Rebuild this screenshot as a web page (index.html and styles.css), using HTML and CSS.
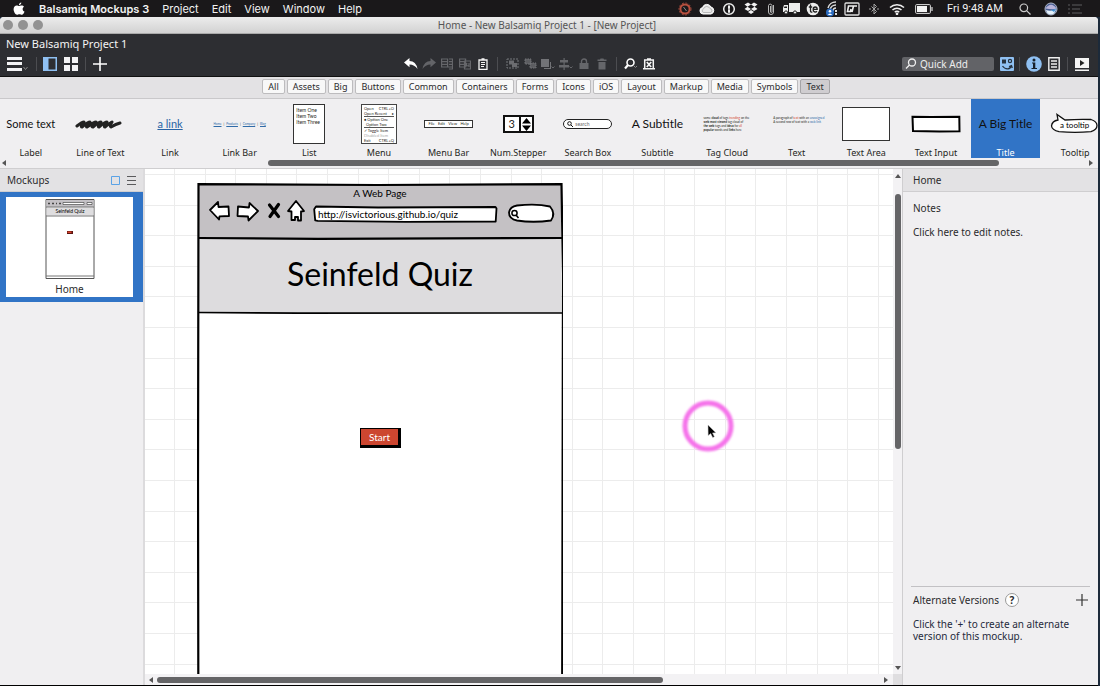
FILE: index.html
```
<!DOCTYPE html>
<html lang="en">
<head>
<meta charset="utf-8">
<title>Home - New Balsamiq Project 1 - [New Project]</title>
<link rel="stylesheet" href="styles.css">
</head>
<body>
<header class="menubar">
  <svg class="apple" width="12" height="14" viewBox="0 0 12 14"><path d="M8.300 .5c.1 1.400-1 2.700-2.300 2.700C5.900 1.800 7 .6 8.300.5zM6.200 4c.6 0 1.300-.6 2.400-.6 1 0 1.900.5 2.400 1.300-2 1.200-1.700 4 .5 4.900C11 11.200 10 12.800 8.800 12.800c-.9 0-1.300-.5-2.400-.5s-1.500.5-2.400.5C2.400 12.800.6 9.700.6 7.300c0-2.500 1.500-3.900 3.100-3.900C4.800 3.400 5.600 4 6.200 4z" fill="#fff"/></svg>
  <nav class="menus">
    <button class="app-name">Balsamiq Mockups 3</button>
    <button>Project</button><button>Edit</button><button>View</button><button>Window</button><button>Help</button>
  </nav>
  <div class="status">
    <span class="s22"><svg width="14" height="14" viewBox="0 0 14 14" fill="none"><circle cx="7" cy="7" r="4.600" stroke="#b8503f" stroke-width="2"/><circle cx="7" cy="7" r="6" stroke="#a0483a" stroke-dasharray="2 1.500"/><path d="M5.500 5l3 4" stroke="#8a8a8a"/></svg></span>
    <span class="s22"><svg width="16" height="12" viewBox="0 0 16 12"><path d="M4 11a3.300 3.300 0 0 1-.5-6.500A4.600 4.600 0 0 1 12 4a3.600 3.600 0 0 1 0 7z" fill="#e8e8e8" stroke="#fff"/><path d="M4.500 9.500a2 2 0 0 1 0-3.600 3.500 3.500 0 0 1 6.500-.3 2 2 0 0 1 .5 3.900z" stroke="#999" stroke-width=".6" fill="none"/></svg></span>
    <span class="s22"><svg width="14" height="14" viewBox="0 0 14 14"><circle cx="7" cy="7" r="5.300" stroke="#eee" stroke-width="1.500" fill="none"/><path d="M6 3.500h2v3l-.7.600.7.600v3H6v-3l.7-.600L6 6.500z" fill="#eee"/></svg></span>
    <span class="s22"><svg width="14" height="13" viewBox="0 0 14 13" fill="#f2f2f2"><path d="M4 .5l3 2-3.500 2.200L.5 2.500zM10 .5l3.500 2-3 2.200L7 2.500zM3.500 4.700L7 7 4 9 .5 6.900zM10.500 4.700l3 2.200L10 9 7 7zM4 9.900l3-2 3 2-3 2.100z"/></svg></span>
    <span class="s18"><svg width="8" height="14" viewBox="0 0 8 14" fill="none" stroke="#bbb"><path d="M6.500 3v7a2.500 2.500 0 0 1-5 0V3.500a1.800 1.800 0 0 1 3.500 0V10a.8.800 0 0 1-1.500 0V4"/></svg></span>
    <span class="s22"><svg width="18" height="13" viewBox="0 0 18 13"><path d="M7 1h11v9H7zM2 3h4v7H1V6z" fill="#eee"/><path d="M2.500 4.500H5V6H2z" fill="#1b191b"/><circle cx="4" cy="10.500" r="1.600" fill="#eee" stroke="#222"/><circle cx="13" cy="10.500" r="1.600" fill="#eee" stroke="#222"/></svg></span>
    <span class="s22"><svg width="14" height="14" viewBox="0 0 14 14"><circle cx="7" cy="7" r="6.300" fill="#eee"/><path d="M4.500 2.500V9q0 1.500 1.800 1M2.800 5h3.400M7.500 7.300h3.700q0-2.300-2-2.300t-2 2.500 2 2.500q1 0 1.800-.8" stroke="#222" stroke-width="1.300" fill="none"/></svg></span>
    <span class="s16"><svg width="14" height="16" viewBox="0 0 14 16" fill="none"><path d="M3 7a8 8 0 0 1 8-6M5 9a6 6 0 0 1 6-5M8 10a3 3 0 0 1 3-3" stroke="#ddd" stroke-width="1.500"/><path d="M11 9v6" stroke="#ddd" stroke-width="2" stroke-dasharray="2 1"/><circle cx="5" cy="11.500" r="4" fill="#2b6cc0"/><circle cx="5" cy="10.300" r="1.300" fill="#fff"/><path d="M2.800 14q2.200-3 4.400 0z" fill="#fff"/></svg></span>
    <span class="s24"><svg width="16" height="14" viewBox="0 0 16 14" fill="none"><rect x="1" y="1" width="14" height="12" rx="1" stroke="#ddd" stroke-width="1.300"/><path d="M6 4h7M9.500 4L8 10M7.500 4H4.500L3.500 9.500h3l.5-2.500" stroke="#eee" stroke-width="1.600"/></svg></span>
    <span class="s20"><svg width="10" height="12" viewBox="0 0 10 12" fill="none" stroke="#a5a5a5"><path d="M2.500 3.500l5 5L5 11V1l2.500 2.500-5 5M0 6h2M8 6h2"/></svg></span>
    <span class="s26"><svg width="16" height="12" viewBox="0 0 16 12" fill="none" stroke="#eee" stroke-width="1.500"><path d="M1 4.500a10 10 0 0 1 14 0M3.500 7a6.500 6.500 0 0 1 9 0M5.800 9.300a3 3 0 0 1 4.400 0"/><circle cx="8" cy="10.800" r=".6" fill="#eee"/></svg></span>
    <span class="s28"><svg width="18" height="10" viewBox="0 0 18 10" fill="none"><rect x=".6" y=".6" width="14.800" height="8.800" rx="1" stroke="#ddd"/><path d="M2 2h10v6H2z" fill="#f4f4f4"/><path d="M17 3v4" stroke="#ccc" stroke-width="1.300"/></svg></span>
    <time class="clock">Fri 9:48 AM</time>
    <span class="s26"><svg width="12" height="12" viewBox="0 0 12 12" fill="none" stroke="#ccc" stroke-width="1.200"><circle cx="4.800" cy="4.800" r="3.800"/><path d="M7.600 7.600L11.500 11.500"/></svg></span>
    <span class="s26"><svg width="14" height="14" viewBox="0 0 14 14"><circle cx="7" cy="7" r="6" fill="#4a5f93" stroke="#aeb6c8"/><path d="M1.500 6.500Q7-1 12.500 6.500 9 8 1.500 6.500" fill="#b9b4da"/><path d="M2 8q5 2 10-1-1 5.500-5 5.500T2 8" fill="#e5f2fb"/><path d="M7 8l5-1-2 3z" fill="#3d8fd0"/></svg></span>
    <span class="s22"><svg width="14" height="10" viewBox="0 0 14 10" stroke="#5c5c5e" stroke-width="1.200"><path d="M0 1h2M0 5h2M0 9h2M4 1h10M4 5h8M4 9h10"/></svg></span>
  </div>
</header>

<div class="window">
  <div class="titlebar">
    <div class="lights"><button aria-label="Close"></button><button aria-label="Minimize"></button><button aria-label="Zoom"></button></div>
    <h1 class="window-title">Home - New Balsamiq Project 1 - [New Project]</h1>
  </div>

  <div class="toolbar">
    <div class="project-name">New Balsamiq Project 1</div>
    <div class="tools">
      <div class="tools-left">
        <button class="t-menu" aria-label="Menu"><svg width="22" height="16" viewBox="0 0 22 16"><path d="M0 1h15v3H0zM0 6h15v3H0zM0 12h15v3H0z" fill="#f3f3f5"/><path d="M16.500 11l2 2.500 2-2.500" stroke="#888" fill="none"/></svg></button>
        <i class="sep"></i>
        <button class="t-panel" aria-label="Toggle navigator"><svg width="14" height="14" viewBox="0 0 14 14"><path d="M0 0h14v14H0z" fill="#8fc0f2"/><path d="M5.500 1.500h7v11h-7z" fill="#2d2e32"/></svg></button>
        <button class="t-grid" aria-label="Grid view"><svg width="14" height="14" viewBox="0 0 14 14" fill="#f3f3f5"><path d="M0 0h6v6H0zM8 0h6v6H8zM0 8h6v6H0zM8 8h6v6H8z"/></svg></button>
        <i class="sep"></i>
        <button class="t-add" aria-label="New mockup"><svg width="14" height="14" viewBox="0 0 14 14"><path d="M7 0v14M0 7h14" stroke="#fff" stroke-width="1.600"/></svg></button>
      </div>
      <div class="tools-center">
        <button aria-label="Undo"><svg width="14" height="12" viewBox="0 0 14 12"><path d="M0 4.500L5.500 0v3Q12 3 13.500 11 10.500 6.500 5.500 6.500v2.800z" fill="#fff"/></svg></button>
        <button aria-label="Redo"><svg width="14" height="12" viewBox="0 0 14 12"><path d="M14 4.500L8.500 0v3Q2 3 .5 11 3.500 6.500 8.500 6.500v2.800z" fill="#636468"/></svg></button>
        <button aria-label="Cut"><svg width="12" height="12" viewBox="0 0 12 12" fill="none" stroke="#65666a" stroke-width="1.200"><path d="M.6 1h6v8h-6zM0 3.700h6M0 6.300h6M8 1h4M8 3.700h4M8 6.300h4M6.500 9h5.500M8 11h4M11.500 1v10"/></svg></button>
        <button aria-label="Copy"><svg width="12" height="12" viewBox="0 0 12 12" fill="none" stroke="#65666a" stroke-width="1.200"><path d="M.6 1h6v8h-6zM0 3.700h6M0 6.300h6M5.500 3h6v8h-6zM8 5l-1 3 3-.5M10 5v4"/></svg></button>
        <button aria-label="Paste"><svg width="10" height="12" viewBox="0 0 10 12" fill="none" stroke="#f5f5f5"><path d="M1 2h8v9.300H1zM3.500 1h3" stroke-width="1.300"/><path d="M3 4.500h4M3 6.500h4M3 8.500h3"/></svg></button>
        <i class="sep"></i>
        <button aria-label="Group"><svg width="13" height="11" viewBox="0 0 13 11" fill="none"><path d="M1 1h11v9H1z" stroke="#75767a" stroke-dasharray="2 1"/><path d="M3 2.500h5v4H3zM6 5h5v4H6z" fill="#6b6c70"/></svg></button>
        <button aria-label="Ungroup"><svg width="13" height="11" viewBox="0 0 13 11"><path d="M1 1h6v5H1zM6 5h6v5H6z" fill="#5c5d61" stroke="#75767a" stroke-dasharray="1.500 1"/></svg></button>
        <button aria-label="Layers"><svg width="14" height="12" viewBox="0 0 14 12"><path d="M0 1h8v8H0zM3 10h6V4h1v7H3z" fill="#727377"/><path d="M10.500 8.500L12 10l1.500-1.500" stroke="#65666a" fill="none"/></svg></button>
        <button aria-label="Align"><svg width="14" height="12" viewBox="0 0 14 12"><path d="M4.500 0h1.200v12H4.500zM1 2h8v2.500H1zM0 7h10v2.500H0z" fill="#65666a"/><path d="M10.500 8.500L12 10l1.500-1.500" stroke="#65666a" fill="none"/></svg></button>
        <button aria-label="Lock"><svg width="10" height="12" viewBox="0 0 10 12"><path d="M.5 5h9v6h-9z" fill="#65666a"/><path d="M2.500 5V3.500a2.500 2.500 0 0 1 5 0V5" stroke="#65666a" stroke-width="1.400" fill="none"/></svg></button>
        <button aria-label="Delete"><svg width="10" height="12" viewBox="0 0 10 12"><path d="M.5 1.500H3l.5-1h3l.5 1h2.500V3h-9zM1.500 4h7v7.500h-7z" fill="#65666a"/></svg></button>
        <i class="sep"></i>
        <button aria-label="Zoom"><svg width="14" height="12" viewBox="0 0 14 12" fill="none"><circle cx="6.500" cy="4.500" r="3.500" stroke="#fff" stroke-width="1.600"/><path d="M4 7L1 10.500" stroke="#fff" stroke-width="2.200"/><path d="M10 8l1.500 1.500L13 8" stroke="#888"/></svg></button>
        <button aria-label="Markup"><svg width="12" height="12" viewBox="0 0 12 12" fill="none" stroke="#f5f5f5"><path d="M1.700 2h8.600v8.700H1.700zM4 1h4M0 10.800h12" stroke-width="1.500"/><path d="M3.800 4l4.400 5M8.200 4L3.800 9" stroke-width="1.700"/></svg></button>
      </div>
      <div class="tools-right">
        <label class="quick-add"><svg width="12" height="12" viewBox="0 0 12 12" fill="none" stroke="#f0f0f0" stroke-width="1.300"><circle cx="7" cy="4.500" r="3.500"/><path d="M4.500 7L1 10.500"/></svg><input type="text" placeholder="Quick Add" aria-label="Quick Add"></label>
        <button class="t-lib" aria-label="UI library"><svg width="14" height="14" viewBox="0 0 14 14"><rect width="14" height="14" rx="1" fill="#8fc0f2"/><path d="M2 2.500h4v4H2z" fill="#26323f"/><circle cx="10" cy="4" r="1.600" fill="none" stroke="#26323f" stroke-width="1.200"/><path d="M2.500 9q2 3 5.500 2.800 2.500-.3 3.500-3.300M9 9.500l2.500-1 .8 2.500" stroke="#26323f" stroke-width="1.300" fill="none"/></svg></button>
        <i class="sep"></i>
        <button class="t-info" aria-label="Project information"><svg width="16" height="16" viewBox="0 0 16 16"><circle cx="8" cy="8" r="7.800" fill="#8fc0f2"/><path d="M6 6.500h3.300V12H11v1H5.500v-1H7V7.500H6z" fill="#17202b"/><circle cx="8" cy="4" r="1.500" fill="#17202b"/></svg></button>
        <button class="t-notes" aria-label="Notes"><svg width="12" height="14" viewBox="0 0 12 14" fill="none" stroke="#f0f0f0" stroke-width="1.400"><path d="M.8.800h10.400v12.400H.8zM3 4h6M3 7h6M3 10h6"/></svg></button>
        <i class="sep"></i>
        <button class="t-play" aria-label="Full screen presentation"><svg width="14" height="14" viewBox="0 0 14 14"><path d="M0 1h14v10H0zM0 12.500h14V14H0z" fill="#f5f5f5"/><path d="M5 3l4.500 3L5 9z" fill="#222"/></svg></button>
      </div>
    </div>
  </div>

  <nav class="categories">
    <button>All</button><button>Assets</button><button>Big</button><button>Buttons</button><button>Common</button><button>Containers</button><button>Forms</button><button>Icons</button><button>iOS</button><button>Layout</button><button>Markup</button><button>Media</button><button>Symbols</button><button class="active">Text</button>
  </nav>

  <section class="library">
    <ul class="shelf">
      <li><div class="thumb sketch small">Some text</div>Label</li>
      <li><div class="thumb"><svg width="50" height="12" viewBox="0 0 50 12"><path d="M2 8q5-4 7-4-4 5-2 5 6-5 8-5-5 5-3 5 7-5 9-5-6 5-3 5 6-5 8-5-4 5-2 5 6-5 8-5-4 5-2 5 5-4 7-5-3 4-1 5 5-3 9-4" fill="none" stroke="#222" stroke-width="3" stroke-linecap="round" stroke-linejoin="round"/></svg></div>Line of Text</li>
      <li><div class="thumb"><span class="link-word">a link</span></div>Link</li>
      <li><div class="thumb micro"><span class="blue">Home</span>|<span class="blue">Products</span>|<span class="blue">Company</span>|<span class="blue">Blog</span></div>Link Bar</li>
      <li><div class="thumb"><div class="mini-list"><span>Item One</span><span>Item Two</span><span>Item Three</span></div></div>List</li>
      <li><div class="thumb"><div class="mini-menu"><p><span>Open</span><span>CTRL+O</span></p><p><span>Open Recent</span><span>▸</span></p><hr><p><span>● Option One</span></p><p><span>&nbsp; Option Two</span></p><hr><p><span>✓ Toggle Item</span></p><p class="dim"><span>Disabled Item</span></p><p><span>Exit</span><span>CTRL+Q</span></p></div></div>Menu</li>
      <li><div class="thumb"><div class="mini-bar"><span>File</span><span>Edit</span><span>View</span><span>Help</span></div></div>Menu Bar</li>
      <li><div class="thumb"><div class="stepper"><span>3</span><svg width="11" height="15" viewBox="0 0 11 15"><path d="M5.500 1L10 6.500H1zM5.500 14L1 8.500h9z"/></svg></div></div>Num.Stepper</li>
      <li><div class="thumb"><div class="mini-search"><svg width="6" height="6" viewBox="0 0 6 6" fill="none" stroke="#111"><circle cx="2.500" cy="2.500" r="1.800"/><path d="M4 4l2 2"/></svg><span>search</span></div></div>Search Box</li>
      <li><div class="thumb sketch">A Subtitle</div>Subtitle</li>
      <li><div class="thumb"><p class="mini-text">some <b>cloud</b> of tags <em>trending</em> on the<br><b>web most viewed</b> tag cloud of<br><b>the web</b> tags and <b>ideas</b> for <em>all</em><br><b>popular</b> words and <b>links</b> here</p></div>Tag Cloud</li>
      <li><div class="thumb raised"><p class="mini-text">A paragraph of <em>text</em> with an <span class="blue">unassigned</span><br>A second row of text with a <span class="blue">web link</span></p></div>Text</li>
      <li><div class="thumb"><div class="mini-area"></div></div>Text Area</li>
      <li><div class="thumb"><svg width="50" height="18" viewBox="0 0 50 18"><path d="M1.500 1.800L20 2l28.300-.3.200 14.500-20 .3L2 16z" fill="#fff" stroke="#000" stroke-width="2"/></svg></div>Text Input</li>
      <li class="selected"><div class="thumb sketch">A Big Title</div>Title</li>
      <li><div class="thumb"><svg width="50" height="22" viewBox="0 0 50 22"><path d="M8 7L7 1.500 15 7q14-1 26-.5 6 2 6 6t-6 6.200q-16 1.300-32 0Q2 17 1.500 13 2 8 8 7z" fill="#fff" stroke="#111" stroke-width="1.300"/><text class="tip-text" x="10" y="15">a tooltip</text></svg></div>Tooltip</li>
    </ul>
    <div class="hscroll"><svg class="arrow" width="4" height="6" viewBox="0 0 4 6"><path d="M4 0v6L0 3z"/></svg><div class="track"><div class="bar lib-bar"></div></div><svg class="arrow" width="4" height="6" viewBox="0 0 4 6"><path d="M0 0v6l4-3z"/></svg></div>
  </section>

  <main class="workspace">
    <aside class="navigator">
      <div class="panel-head"><h2>Mockups</h2>
        <button aria-label="Thumbnails"><svg width="9" height="9" viewBox="0 0 9 9"><path d="M.5.5h8v8h-8z" fill="none" stroke="#5ba3e6"/></svg></button>
        <button aria-label="List"><svg width="9" height="9" viewBox="0 0 9 9"><path d="M0 .5h9M0 4.500h9M0 8.500h9" stroke="#5a5a5c"/></svg></button>
      </div>
      <a class="mockup-card" href="#home">
        <svg width="50" height="82" viewBox="0 0 50 82"><path d="M1 1.500h48v79H1z" fill="#fff" stroke="#555"/><path d="M1.500 2h47v7h-47z" fill="#c4c1c5"/><path d="M1.500 9.500h47v8h-47z" fill="#dedddf"/><path d="M1 9h48M1 18h48M1 78h48" stroke="#777"/><path d="M3 5.500h2M7 5.500h2M11 5.500h1M14 5.500h2" stroke="#444" stroke-width="1.500"/><path d="M18 4.500h21v2H18zM42 4.500h5v2h-5z" fill="#fff" stroke="#333" stroke-width=".6"/><text class="card-title" x="25" y="15">Seinfeld Quiz</text><path d="M22 33h6v3h-6z" fill="#5b1410"/><path d="M22.500 33.500h4v1.500h-4z" fill="#d9442c"/></svg>
        <span>Home</span>
      </a>
    </aside>

    <section class="stage">
      <div class="canvas">
        <svg class="grid-lines" width="100%" height="100%"><defs><pattern id="grid" x="29" y="5" width="153" height="153" patternUnits="userSpaceOnUse"><path d="M.5 0v153M31.500 0v153M61.500 0v153M92.500 0v153M122.500 0v153M0 .5h153M0 31.500h153M0 61.500h153M0 92.500h153M0 122.500h153" stroke="#ececec"/></pattern></defs><rect width="100%" height="100%" fill="url(#grid)"/></svg>

        <article class="web-page">
          <svg class="frame" width="366" height="600" viewBox="0 0 366 600"><path d="M1 1h363v600H1z" fill="#fff"/><path d="M1 1.500l363-.5v55H1z" fill="#c4c1c4"/><path d="M1 56h363v74H1z" fill="#dddcde"/><g fill="none" stroke="#000"><path d="M1.500 600L1 300 1.500 1.200 180 2l184.500-.8L366 90l-1 510" stroke-width="2.200"/><path d="M1 55l120 .8 244-.8" stroke-width="2.200"/><path d="M1 129.500l100 .6L365 130" stroke-width="1.600"/></g>
            <g fill="#fff" stroke="#000" stroke-width="1.800" stroke-linejoin="round"><path d="M13 27l8-8 .5 5 10-.5.5 9.500-9.500.3-.5 3.200z"/><path d="M61 28l-8.500-8-.5 4.500-11-1-.5 9.500 10.500.5.5 4z"/><path d="M99 18l8 10-3 .5v9h-3v-3.500h-3V37h-3.500v-8.500L91 28z"/><path d="M119 23.500l62 1 117.500-.5 1 1.500-.8 13-90 .3-88-1-2.500-.5-1-11z"/><path d="M320 22.500q20-2 33 1 6 7 1 14-18 2.500-34 0-8-1.500-8-8 1-6 8-7z"/></g>
            <path d="M72.500 22l9 11.500M81.500 21.500L73 33.500" stroke="#000" stroke-width="3.200" stroke-linecap="round"/><circle cx="317.500" cy="30" r="2.600" fill="none" stroke="#000" stroke-width="1.500"/><path d="M319 32l2.500 3" stroke="#000" stroke-width="1.600"/></svg>
          <div class="chrome"><div class="page-title">A Web Page</div><input class="url" type="text" aria-label="Address" value="http://isvictorious.github.io/quiz"></div>
          <h2 class="quiz-title">Seinfeld Quiz</h2>
        </article>
        <button class="start">Start</button>
        <svg class="pointer" width="56" height="56" viewBox="0 0 56 56"><defs><filter id="soft"><feGaussianBlur stdDeviation=".9"/></filter></defs><circle cx="28" cy="28" r="23" fill="none" stroke="#f573ea" stroke-width="5" filter="url(#soft)"/><path d="M28 27l.2 10.500 2.500-2 2 4 1.700-.8-1.900-3.800 3.300-.2z" fill="#000" stroke="#bbb" stroke-width=".5"/></svg>
      </div>
      <div class="vscroll"><svg class="arrow" width="6" height="4" viewBox="0 0 6 4"><path d="M0 4h6L3 0z"/></svg><div class="vtrack"><div class="bar v-bar"></div></div><svg class="arrow" width="6" height="4" viewBox="0 0 6 4"><path d="M0 0h6L3 4z"/></svg></div>
      <div class="hscroll canvas-scroll"><svg class="arrow" width="4" height="6" viewBox="0 0 4 6"><path d="M4 0v6L0 3z"/></svg><div class="track"><div class="bar canvas-bar"></div></div><svg class="arrow" width="4" height="6" viewBox="0 0 4 6"><path d="M0 0v6l4-3z"/></svg></div>
      <div class="corner"></div>
    </section>

    <aside class="inspector">
      <div class="panel-head"><h2>Home</h2></div>
      <div class="notes"><h3>Notes</h3><p>Click here to edit notes.</p></div>
      <div class="versions">
        <div class="versions-head"><h3>Alternate Versions</h3><button class="help" aria-label="Help">?</button><button class="add" aria-label="Add version"><svg width="12" height="12" viewBox="0 0 12 12"><path d="M6 0v12M0 6h12" stroke="#333" stroke-width="1.200"/></svg></button></div>
        <p>Click the '+' to create an alternate version of this mockup.</p>
      </div>
    </aside>
  </main>
</div>
</body>
</html>
```
FILE: styles.css
```
* { box-sizing: border-box; margin: 0; padding: 0; }
body { height: 100vh; display: flex; flex-direction: column; overflow: hidden; background: #1c2a3a; font: 10px/14px "Noto Sans", "Open Sans", sans-serif; color: #2b2b2d; }
button { background: none; border: 0; font: inherit; color: inherit; display: flex; align-items: center; justify-content: center; }
svg { display: block; flex: none; }
ul { list-style: none; }
h1, h2, h3 { font: inherit; }

.menubar { height: 17px; flex: none; background: #1a181a; color: #f2f2f2; display: flex; align-items: center; padding: 0 14px 0 13px; font: 11px/16px Roboto, Inter, sans-serif; }
.menus { display: flex; gap: 13px; margin-left: 14px; margin-right: auto; font-family: Inter, sans-serif; }
.app-name { font-weight: 600; }
.status { display: flex; align-items: center; }
.status span { display: flex; justify-content: center; }
.s16 { width: 16px; }
.s18 { width: 18px; }
.s20 { width: 20px; }
.s22 { width: 22px; }
.s24 { width: 24px; }
.s26 { width: 26px; }
.s28 { width: 28px; }
.clock { width: 74px; text-align: center; white-space: nowrap; }

.window { flex: 1; min-height: 0; margin-right: 2px; display: flex; flex-direction: column; background: #f0eff1; border-radius: 4px 4px 0 0; overflow: hidden; border-bottom: 1px solid #000; }
.titlebar { height: 17px; flex: none; display: grid; grid-template-columns: 1fr auto 1fr; align-items: center; background: linear-gradient(#ececec, #d2d2d2); border-bottom: 1px solid #aaa; color: #555; }
.lights { display: flex; gap: 5px; padding-left: 3px; }
.lights button { width: 10px; height: 10px; border-radius: 50%; background: #929292; }
.window-title { margin-right: 4px; }

.toolbar { height: 43px; flex: none; background: #2d2e32; color: #f4f4f4; border-bottom: 1px solid #111; padding-top: 3px; }
.project-name { padding-left: 6px; line-height: 14px; font-size: 11px; }
.tools { display: grid; grid-template-columns: 1fr auto 1fr; align-items: center; height: 25px; }
.tools-left, .tools-center, .tools-right { display: flex; align-items: center; }
.tools-left { padding-left: 7px; gap: 7px; }
.tools-left .t-panel { margin-left: -1px; }
.tools-center { margin-right: 38px; }
.tools-center button { width: 18px; height: 18px; }
.sep { width: 1px; height: 14px; background: #4c4d51; }
.tools-center .sep { margin: 0 5px; }
.tools-right { justify-content: flex-end; gap: 7px; padding-right: 9px; }
.quick-add { width: 92px; height: 14px; display: flex; align-items: center; gap: 3px; padding-left: 3px; background: #626367; border-radius: 2px; margin-right: -1px; }
.quick-add input { width: 70px; height: 14px; border: 0; background: none; font: inherit; color: #fff; outline: 0; }
.quick-add input::placeholder { color: #eee; opacity: 1; }
.t-lib { margin-right: -2px; }
.t-info { margin: 0 -1px; }

.categories { height: 22px; flex: none; display: flex; justify-content: center; align-items: center; gap: 2px; padding: 0 6px 2px 0; background: #e3e2e4; border-bottom: 1px solid #c9c8ca; }
.categories button { height: 15px; padding: 0 5px; background: #f8f8f8; border: 1px solid #bdbcbe; border-radius: 2px; font-size: 9px; line-height: 12px; }
.categories .active { background: #cfcdd0; border-color: #a5a4a6; }

.library { height: 70px; flex: none; display: flex; flex-direction: column; border-bottom: 1px solid #cfced0; }
.shelf { display: grid; grid-template-columns: repeat(16, minmax(0, 1fr)); margin: 0 -12px 0 -4px; height: 59px; color: #1f1f21; font-size: 9px; line-height: 8px; }
.shelf li { text-align: center; white-space: nowrap; }
.thumb { height: 50px; display: flex; align-items: center; justify-content: center; }
.sketch { font-family: Lato, sans-serif; color: #111; font-size: 12px; }
.small { font-size: 11px; }
.selected { background: #3174c6; color: #fff; }
.raised { padding-bottom: 8px; }
.blue { color: #2f6ba8; }
.link-word { color: #2a64a5; text-decoration: underline; font: 11px/14px Lato, sans-serif; }
.micro { font: 3px/6px Lato, sans-serif; gap: 2px; }
.micro .blue { text-decoration: underline; }
.mini-list { width: 32px; height: 40px; border: 1px solid #333; background: #fff; display: flex; flex-direction: column; padding: 2px; text-align: left; font: 5px/6px Lato, sans-serif; }
.mini-menu { width: 36px; height: 40px; border: 1px solid #444; background: #fff; padding: 1px 2px; font: 4px/5px Lato, sans-serif; }
.mini-menu p { display: flex; justify-content: space-between; }
.mini-menu hr { border: 0; border-top: 1px solid #555; }
.dim { color: #aaa; }
.mini-bar { width: 49px; height: 8px; border: 1px solid #333; background: #fff; display: flex; justify-content: space-evenly; font: 4px/6px Lato, sans-serif; }
.stepper { width: 31px; height: 18px; border: 2px solid #111; background: #fff; display: flex; align-items: center; justify-content: space-between; font: 11px/14px Lato, sans-serif; }
.stepper span { flex: 1; border-right: 2px solid #111; }
.mini-search { width: 49px; height: 10px; border: 1px solid #222; border-radius: 5px; background: #fff; display: flex; align-items: center; gap: 2px; padding-left: 3px; font: 5px/6px Lato, sans-serif; color: #666; }
.mini-text { font: 3px/4px Lato, sans-serif; text-align: left; width: 47px; }
.mini-text em { color: #d23a28; font-style: normal; }
.mini-area { width: 48px; height: 34px; background: #fff; border: 1px solid #333; }
.tip-text { font: 8px Lato, sans-serif; }
.card-title { font: 5px Lato, sans-serif; text-anchor: middle; }

.hscroll { height: 10px; display: flex; align-items: center; padding: 0 5px 0 2px; }
.arrow { fill: #555; }
.track { flex: 1; margin: 0 4px; }
.bar { background: #656567; border-radius: 3px; }
.lib-bar { height: 6px; width: 68%; margin-left: 24%; }
.canvas-bar { height: 6px; width: 70%; }

.workspace { flex: 1; min-height: 0; display: flex; }
.navigator { width: 145px; flex: none; border-right: 2px solid #dcdbdd; background: #f0eff1; }
.panel-head { height: 23px; display: flex; align-items: center; gap: 7px; background: #e3e2e4; border-bottom: 1px solid #cfced0; font-size: 10px; }
.navigator .panel-head { padding: 0 7px; }
.navigator h2 { flex: 1; }
.mockup-card { display: flex; flex-direction: column; align-items: center; background: #fff; border: 5px solid #3174c6; border-right-width: 10px; border-left-width: 6px; padding-top: 1px; color: inherit; text-decoration: none; height: 110px; line-height: 18px; }

.stage { flex: 1; min-width: 0; display: grid; grid-template-columns: 1fr 9px; grid-template-rows: minmax(0, 1fr) 11px; }
.canvas { position: relative; overflow: hidden; background: #fff; }
.grid-lines { position: absolute; inset: 0; }
.web-page { position: absolute; left: 52px; top: 14px; width: 366px; font-family: Lato, sans-serif; color: #000; }
.frame { position: absolute; left: 0; top: 0; }
.chrome { position: relative; height: 55px; padding-top: 3px; text-align: center; }
.page-title { font-size: 10px; line-height: 14px; }
.url { display: block; width: 176px; height: 14px; margin: 7px 0 0 121px; border: 0; background: none; font: 10px/14px Lato, sans-serif; color: #000; }
.quiz-title { position: relative; text-align: center; font-size: 32px; line-height: 72px; }
.start { position: absolute; left: 215px; top: 259px; width: 39px; height: 18px; background: #cc4630; border: 1px solid #000; box-shadow: 1px 1px 0 1px #000; color: #fff; font: 10px/14px Lato, sans-serif; }
.pointer { position: absolute; left: 535px; top: 229px; }
.vscroll { display: flex; flex-direction: column; align-items: center; padding: 5px 0 4px; background: #f3f2f4; }
.vtrack { flex: 1; padding-top: 16px; }
.v-bar { width: 6px; height: 54%; }
.canvas-scroll { height: 11px; background: #f3f2f4; padding-left: 4px; }
.corner { background: #dfdee0; }

.inspector { width: 196px; flex: none; border-left: 1px solid #cfced0; display: flex; flex-direction: column; }
.inspector .panel-head { padding-left: 10px; }
.notes { padding: 9px 10px; display: flex; flex-direction: column; gap: 10px; }
.versions { margin: auto 8px 0; border-top: 1px solid #c2c1c4; padding: 6px 2px 43px; line-height: 12px; color: #1f2a3c; }
.versions-head { display: flex; align-items: center; gap: 6px; margin-bottom: 11px; color: #2b2b2d; }
.help { width: 14px; height: 14px; border: 1px solid #999; border-radius: 50%; font-weight: 700; background: #fff; }
.add { margin-left: auto; }
```
